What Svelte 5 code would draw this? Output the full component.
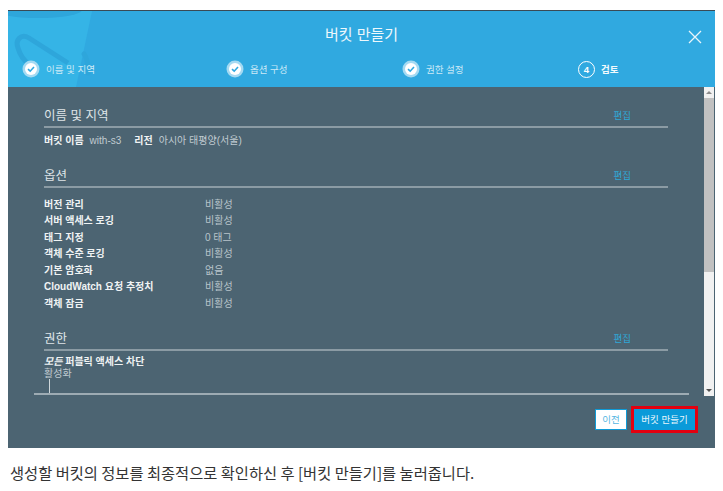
<script>
    const steps = [
        { label: '이름 및 지역', done: true },
        { label: '옵션 구성', done: true },
        { label: '권한 설정', done: true },
        { label: '검토', done: false, num: 4 }
    ];
    const options = [
        ['버전 관리', '비활성'],
        ['서버 액세스 로깅', '비활성'],
        ['태그 지정', '0 태그'],
        ['객체 수준 로깅', '비활성'],
        ['기본 암호화', '없음'],
        ['CloudWatch 요청 추정치', '비활성'],
        ['객체 잠금', '비활성']
    ];
</script>

<div class="page">
    <div class="modal">
        <header class="head">
            <svg class="deco" width="90" height="76" viewBox="0 0 90 76">
                <path d="M0 0H84L68 76H0Z" fill="#35b4e6" />
                <ellipse cx="30" cy="-1" rx="44" ry="8" fill="#2ea6db" />
                <path d="M60 52L21 27C13 22 7 29 10 37C12 44 16 50 22 54" stroke="#2ea6db" stroke-width="5" fill="none" />
                <path d="M76 43C79 46 80 52 80 62" stroke="#2ea6db" stroke-width="5" stroke-linecap="round" fill="none" />
            </svg>
            <div class="title">버킷 만들기</div>
            <svg class="close" width="14" height="14" viewBox="0 0 14 14">
                <path d="M1 1L13 13M13 1L1 13" stroke="#e8f5fb" stroke-width="1.3" fill="none" />
            </svg>
            <div class="steps">
                {#each steps as s}
                    <div class="step">
                        {#if s.done}
                            <svg width="18" height="18" viewBox="0 0 18 18">
                                <circle cx="9" cy="9" r="8.5" fill="#a5daf2" />
                                <circle cx="9" cy="9" r="6" fill="#fff" />
                                <path d="M6 9.2L8.2 11.2L12 7" stroke="#30a9e0" stroke-width="1.6" fill="none" />
                            </svg>
                            <span class="step-label">{s.label}</span>
                        {:else}
                            <span class="num">{s.num}</span>
                            <span class="step-label current">{s.label}</span>
                        {/if}
                    </div>
                {/each}
            </div>
        </header>

        <div class="content">
            <div class="scroll">
                <section class="first">
                    <div class="sec-head"><h2>이름 및 지역</h2><span class="edit">편집</span></div>
                    <div class="inline">
                        <b>버킷 이름</b><span class="v1">with-s3</span><b class="b2">리전</b><span class="v1">아시아 태평양(서울)</span>
                    </div>
                </section>
                <section class="second">
                    <div class="sec-head"><h2>옵션</h2><span class="edit">편집</span></div>
                    <div class="rows">
                        {#each options as o}
                            <div class="row"><b>{o[0]}</b><span>{o[1]}</span></div>
                        {/each}
                    </div>
                </section>
                <section class="third">
                    <div class="sec-head"><h2>권한</h2><span class="edit">편집</span></div>
                    <div class="perm"><b><i>모든</i> 퍼블릭 액세스 차단</b><span>활성화</span></div>
                    <div class="tick"></div>
                </section>
            </div>
            <div class="scrollbar">
                <div class="arrow"><span class="up"></span></div>
                <div class="thumb"></div>
                <div class="track"></div>
                <div class="arrow"><span class="down"></span></div>
            </div>
        </div>

        <footer class="foot">
            <button class="prev">이전</button>
            <button class="create">버킷 만들기</button>
        </footer>
    </div>
    <p class="caption">생성할 버킷의 정보를 최종적으로 확인하신 후 [버킷 만들기]를 눌러줍니다.</p>
</div>

<style>
    :global(body) {
        background: #fff;
    }
    .page {
        width: 723px;
        height: 491px;
        padding: 10px 8px 0;
        box-sizing: border-box;
        font-family: "Liberation Sans", "Noto Sans CJK KR", sans-serif;
        overflow: hidden;
    }
    .modal {
        width: 707px;
        height: 438px;
        background: #4c6472;
        border-top: 1px solid #3a4a55;
        box-sizing: border-box;
        display: flex;
        flex-direction: column;
    }
    .head {
        position: relative;
        height: 76px;
        flex: none;
        background: #30a9e0;
        color: #fff;
        overflow: hidden;
    }
    .deco {
        position: absolute;
        left: 0;
        top: 0;
    }
    .title {
        position: relative;
        text-align: center;
        font-size: 15px;
        line-height: 20px;
        padding-top: 14px;
        color: #eef8fc;
    }
    .close {
        position: absolute;
        right: 13px;
        top: 19px;
    }
    .steps {
        position: relative;
        display: flex;
        margin-top: 15px;
        padding-left: 14px;
    }
    .step {
        width: 204px;
        display: flex;
        align-items: center;
        gap: 6px;
        height: 18px;
        flex: none;
    }
    .step:nth-child(2) {
        width: 176px;
    }
    .step:nth-child(3) {
        width: 176px;
    }
    .step-label {
        font-size: 9.5px;
        color: #cdeaf7;
    }
    .step-label.current {
        font-weight: bold;
        color: #f2fafd;
    }
    .num {
        width: 15px;
        height: 15px;
        border: 1.3px solid #fff;
        border-radius: 50%;
        font-size: 9.5px;
        font-weight: bold;
        display: flex;
        align-items: center;
        justify-content: center;
    }
    .content {
        height: 309px;
        flex: none;
        display: flex;
        position: relative;
    }
    .scroll {
        width: 696px;
        flex: none;
        padding: 0 36px;
        box-sizing: border-box;
        overflow: hidden;
    }
    .first {
        padding-top: 19px;
    }
    .second {
        padding-top: 18px;
    }
    .third {
        padding-top: 17px;
    }
    .sec-head {
        display: flex;
        justify-content: space-between;
        align-items: flex-end;
        height: 22px;
        box-sizing: border-box;
        border-bottom: 2px solid #8b9ba4;
    }
    h2 {
        margin: 0;
        font-weight: normal;
        font-size: 12.5px;
        line-height: 20px;
        color: #dfe5e8;
    }
    .edit {
        font-size: 9.5px;
        line-height: 16px;
        color: #2fa8d8;
        padding-right: 37px;
        padding-bottom: 2px;
    }
    b {
        font-weight: bold;
        color: #f0f3f4;
    }
    .inline {
        font-size: 10px;
        line-height: 14px;
        padding-top: 6px;
        color: #c0cbd1;
        display: flex;
    }
    .v1 {
        margin-left: 6px;
    }
    .b2 {
        margin-left: 13px;
    }
    .rows {
        padding-top: 9px;
    }
    .row {
        display: grid;
        grid-template-columns: 161px 1fr;
        font-size: 10px;
        line-height: 16.45px;
        color: #b9c5cb;
    }
    .perm {
        font-size: 10px;
        line-height: 12px;
        padding-top: 5px;
        color: #c0cbd1;
        display: flex;
        flex-direction: column;
    }
    .tick {
        width: 1px;
        height: 15px;
        background: #cfd7db;
        margin-left: 5px;
        position: absolute;
        left: 36px;
        top: 292px;
    }
    .scroll::after {
        content: "";
        position: absolute;
        left: 26px;
        right: 26px;
        top: 306px;
        height: 2px;
        background: #9dabb3;
    }
    .scrollbar {
        width: 10px;
        background: #f1f1f1;
        display: flex;
        flex-direction: column;
        flex: none;
        position: relative;
    }
    .arrow {
        height: 11px;
        flex: none;
        display: flex;
        align-items: center;
        justify-content: center;
    }
    .up, .down {
        width: 0;
        height: 0;
        border-left: 3px solid transparent;
        border-right: 3px solid transparent;
    }
    .up {
        border-bottom: 3px solid #8a8a8a;
    }
    .down {
        border-top: 3px solid #505050;
    }
    .thumb {
        height: 174px;
        flex: none;
        background: #c1c1c1;
    }
    .track {
        flex: 1;
    }
    .foot {
        flex: 1;
        display: flex;
        justify-content: flex-end;
        align-items: center;
        gap: 4px;
        padding: 0 17px 6px 0;
    }
    button {
        font-family: inherit;
        font-size: 9.5px;
        padding: 0;
        box-sizing: border-box;
    }
    .prev {
        width: 32px;
        height: 21px;
        background: #fff;
        border: 1px solid #0f9bd7;
        color: #55b6e2;
    }
    .create {
        width: 67px;
        height: 27px;
        background: #0a9ad9;
        border: 3px solid #e3000f;
        color: #e8f6fc;
    }
    .caption {
        margin: 13px 0 0 2px;
        font-family: "Noto Sans CJK KR", sans-serif;
        font-size: 15.3px;
        line-height: 22px;
        color: #333;
    }
</style>
